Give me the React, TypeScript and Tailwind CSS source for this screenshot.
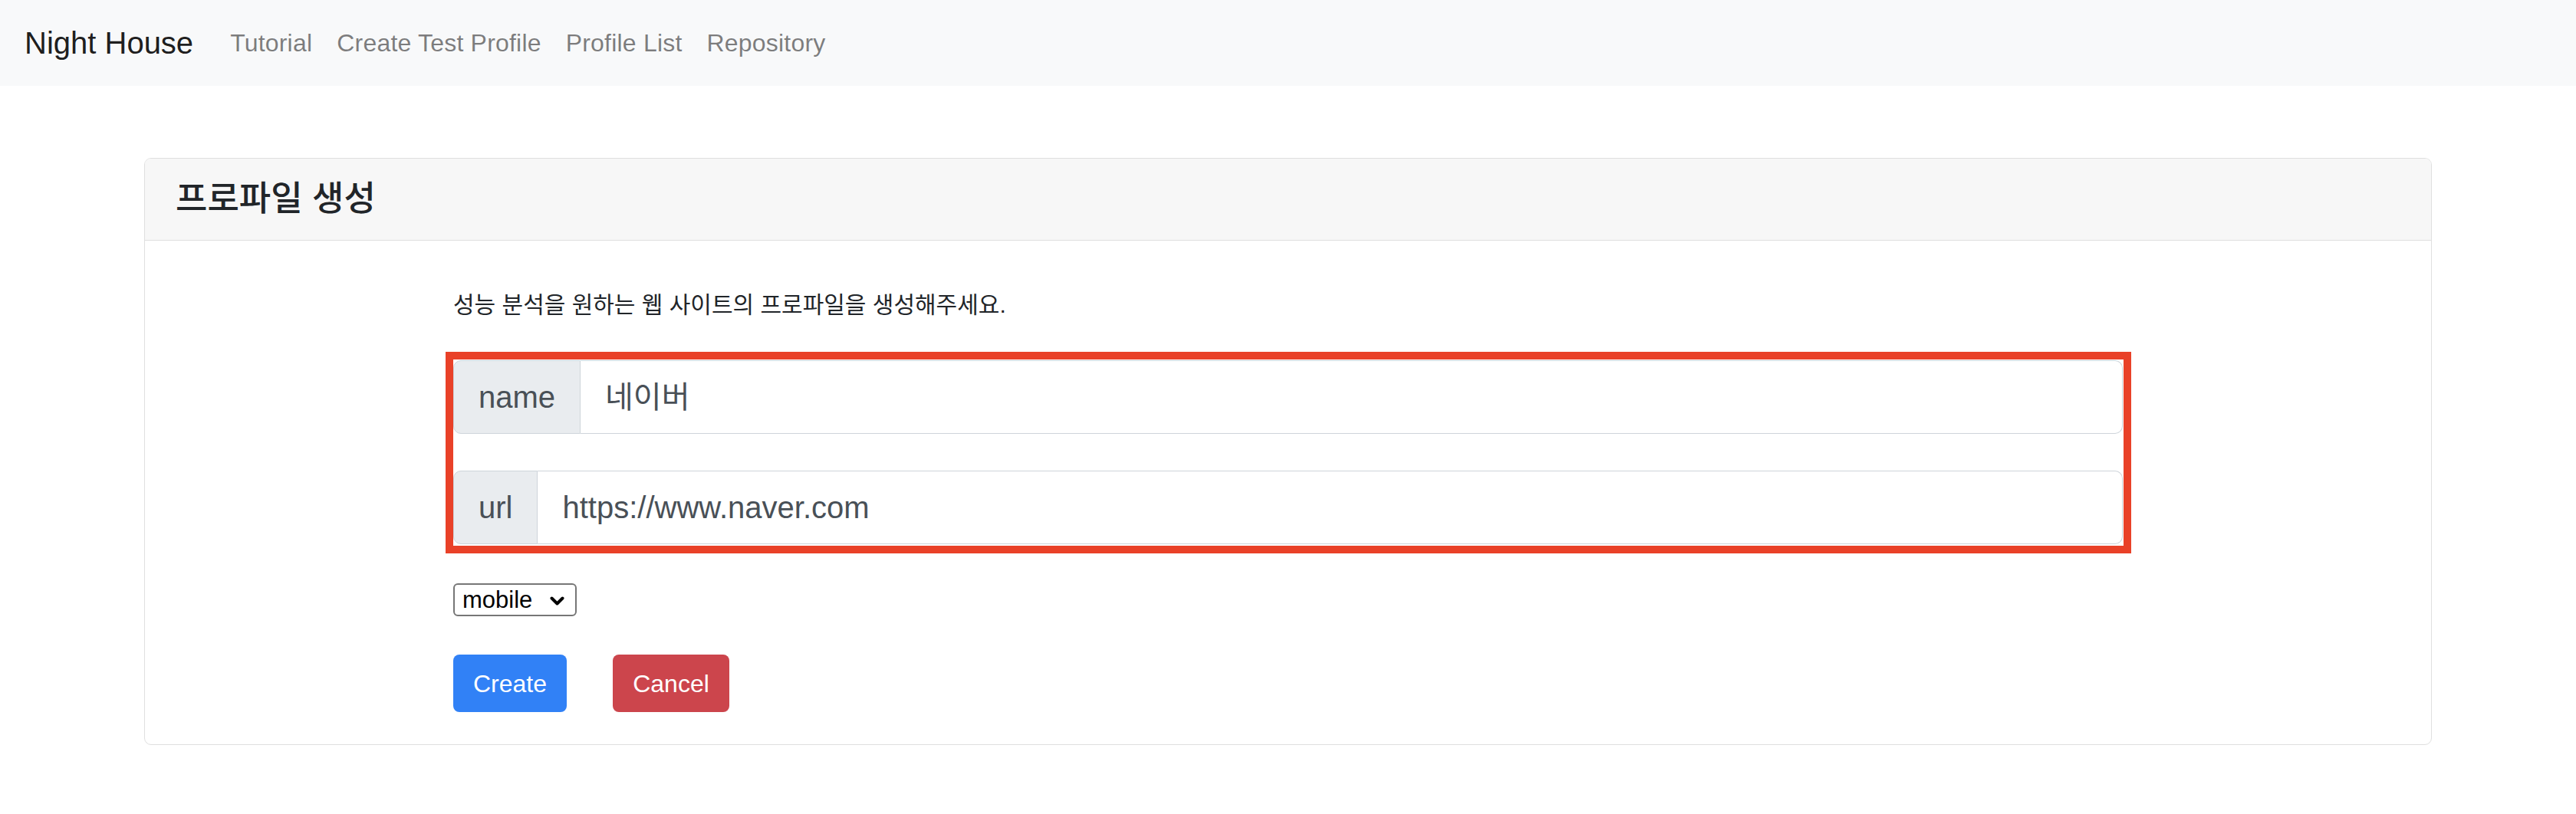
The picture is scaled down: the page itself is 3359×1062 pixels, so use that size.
import React from 'react';

export default function App() {
  return (
    <div className="min-h-screen bg-white font-['Liberation_Sans','Noto_Sans_CJK_KR',sans-serif] text-[#212529]">
      {/* navbar */}
      <nav className="h-[112px] bg-[#f8f9fa] flex items-center px-[32px]">
        <a className="text-[40px] leading-[60px] text-black/90 mr-[32px]">Night House</a>
        <div className="flex items-center">
          <a className="px-[16px] text-[32px] leading-[48px] text-black/50 tracking-[0.2px]">Tutorial</a>
          <a className="px-[16px] text-[32px] leading-[48px] text-black/50 tracking-[0.2px]">Create Test Profile</a>
          <a className="px-[16px] text-[32px] leading-[48px] text-black/50 tracking-[0.2px]">Profile List</a>
          <a className="px-[16px] text-[32px] leading-[48px] text-black/50 tracking-[0.2px]">Repository</a>
        </div>
      </nav>

      {/* card */}
      <div className="mx-[188px] mt-[94px] border border-[#dfdfdf] rounded-[9px] overflow-hidden">
        <div className="bg-[#f7f7f7] border-b border-[#dfdfdf] px-[40px] py-[25px]">
          <h4 className="text-[45px] leading-[56px] font-medium text-[#212529]">프로파일 생성</h4>
        </div>
        <div className="pt-[63px] pb-[42px]">
          <div className="w-[2177px] mx-auto">
            <p className="text-[30px] leading-[42px] text-[#212529]">성능 분석을 원하는 웹 사이트의 프로파일을 생성해주세요.</p>

            <div className="relative mt-[51px] flex flex-col gap-[48px]">
              <div className="flex h-[96px]">
                <span className="flex items-center bg-[#e9ecef] border border-[#ced4da] rounded-l-[10px] px-[32px] text-[40px] text-[#495057]">name</span>
                <input
                  className="flex-1 min-w-0 border border-l-0 border-[#ced4da] rounded-r-[10px] px-[32px] text-[40px] text-[#495057] bg-white outline-none"
                  defaultValue="네이버"
                />
              </div>
              <div className="flex h-[96px]">
                <span className="flex items-center bg-[#e9ecef] border border-[#ced4da] rounded-l-[10px] px-[32px] text-[40px] text-[#495057]">url</span>
                <input
                  className="flex-1 min-w-0 border border-l-0 border-[#ced4da] rounded-r-[10px] px-[32px] text-[40px] text-[#495057] bg-white outline-none"
                  defaultValue="https://www.naver.com"
                />
              </div>
              {/* annotation box */}
              <div className="absolute -top-[11px] -bottom-[12px] -left-[10px] -right-[11px] border-[10px] border-[#e94128] pointer-events-none" />
            </div>

            <div className="mt-[51px] relative inline-block">
              <select className="appearance-none w-[161px] h-[43px] border-2 border-[#767676] rounded-[6px] pl-[10px] text-[31px] leading-[39px] text-black bg-white outline-none" defaultValue="mobile">
                <option value="mobile">mobile</option>
                <option value="desktop">desktop</option>
              </select>
              <svg className="absolute right-[16px] top-[17px] w-[19px] h-[12px] pointer-events-none" viewBox="0 0 19 12" fill="none">
                <path d="M2.5 2.5l7 7 7-7" stroke="black" strokeWidth="4" strokeLinecap="round" strokeLinejoin="round" />
              </svg>
            </div>

            <div className="mt-[50px] flex gap-[60px]">
              <button className="w-[148px] h-[75px] rounded-[8px] bg-[#3181f6] text-white text-[32px]">Create</button>
              <button className="w-[152px] h-[75px] rounded-[8px] bg-[#cc454c] text-white text-[32px]">Cancel</button>
            </div>
          </div>
        </div>
      </div>
    </div>
  );
}
